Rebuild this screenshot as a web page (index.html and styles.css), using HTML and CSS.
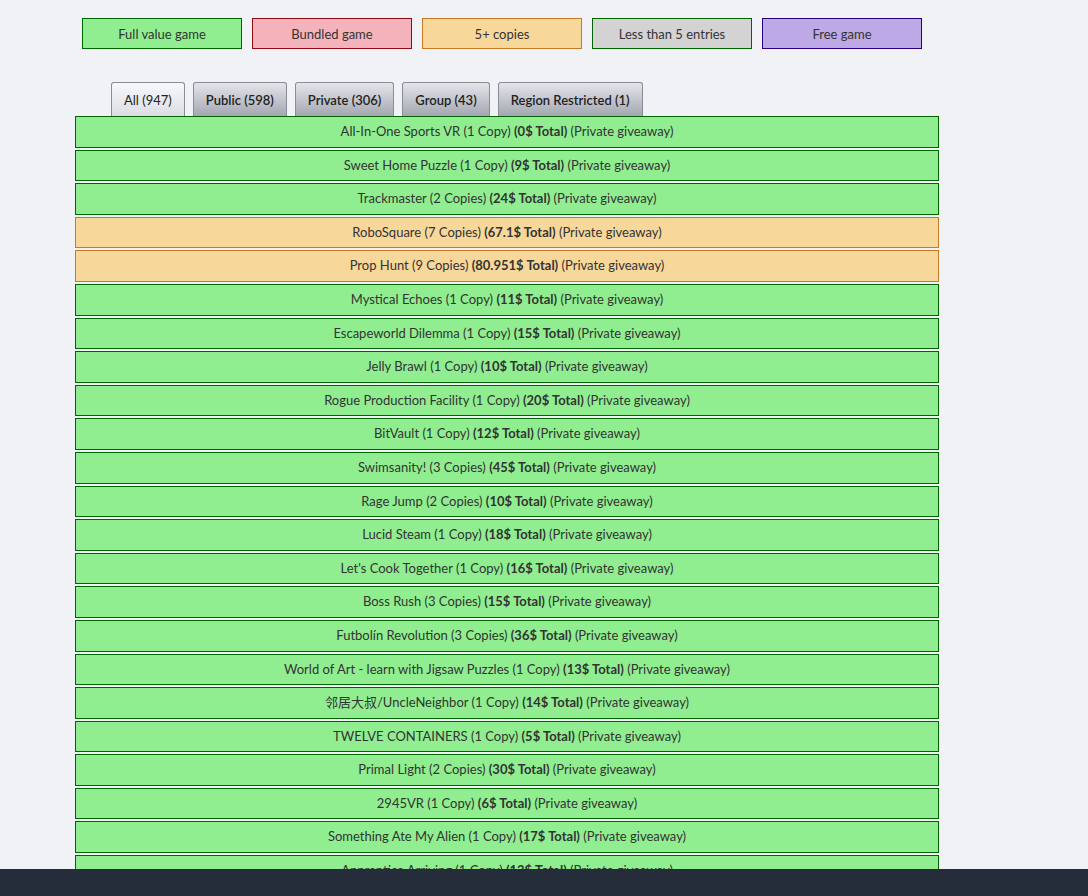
FILE: index.html
```html
<!DOCTYPE html>
<html lang="en">
<head>
  <meta charset="UTF-8" />
  <title>Giveaways</title>
  <link rel="stylesheet" href="styles.css">
</head>
<body>
  <div class="legend">
    <div class="legend-item full">Full value game</div>
    <div class="legend-item bundled">Bundled game</div>
    <div class="legend-item copies">5+ copies</div>
    <div class="legend-item few">Less than 5 entries</div>
    <div class="legend-item free">Free game</div>
  </div>

  <div class="giveaways">
    <div class="tabs">
      <div class="tab active">All (947)</div>
      <div class="tab">Public (598)</div>
      <div class="tab">Private (306)</div>
      <div class="tab">Group (43)</div>
      <div class="tab">Region Restricted (1)</div>
    </div>
    <div class="list">
      <div class="row full">All-In-One Sports VR (1 Copy) <b>(0$ Total)</b> (Private giveaway)</div>
      <div class="row full">Sweet Home Puzzle (1 Copy) <b>(9$ Total)</b> (Private giveaway)</div>
      <div class="row full">Trackmaster (2 Copies) <b>(24$ Total)</b> (Private giveaway)</div>
      <div class="row copies">RoboSquare (7 Copies) <b>(67.1$ Total)</b> (Private giveaway)</div>
      <div class="row copies">Prop Hunt (9 Copies) <b>(80.951$ Total)</b> (Private giveaway)</div>
      <div class="row full">Mystical Echoes (1 Copy) <b>(11$ Total)</b> (Private giveaway)</div>
      <div class="row full">Escapeworld Dilemma (1 Copy) <b>(15$ Total)</b> (Private giveaway)</div>
      <div class="row full">Jelly Brawl (1 Copy) <b>(10$ Total)</b> (Private giveaway)</div>
      <div class="row full">Rogue Production Facility (1 Copy) <b>(20$ Total)</b> (Private giveaway)</div>
      <div class="row full">BitVault (1 Copy) <b>(12$ Total)</b> (Private giveaway)</div>
      <div class="row full">Swimsanity! (3 Copies) <b>(45$ Total)</b> (Private giveaway)</div>
      <div class="row full">Rage Jump (2 Copies) <b>(10$ Total)</b> (Private giveaway)</div>
      <div class="row full">Lucid Steam (1 Copy) <b>(18$ Total)</b> (Private giveaway)</div>
      <div class="row full">Let's Cook Together (1 Copy) <b>(16$ Total)</b> (Private giveaway)</div>
      <div class="row full">Boss Rush (3 Copies) <b>(15$ Total)</b> (Private giveaway)</div>
      <div class="row full">Futbolín Revolution (3 Copies) <b>(36$ Total)</b> (Private giveaway)</div>
      <div class="row full">World of Art - learn with Jigsaw Puzzles (1 Copy) <b>(13$ Total)</b> (Private giveaway)</div>
      <div class="row full">邻居大叔/UncleNeighbor (1 Copy) <b>(14$ Total)</b> (Private giveaway)</div>
      <div class="row full">TWELVE CONTAINERS (1 Copy) <b>(5$ Total)</b> (Private giveaway)</div>
      <div class="row full">Primal Light (2 Copies) <b>(30$ Total)</b> (Private giveaway)</div>
      <div class="row full">2945VR (1 Copy) <b>(6$ Total)</b> (Private giveaway)</div>
      <div class="row full">Something Ate My Alien (1 Copy) <b>(17$ Total)</b> (Private giveaway)</div>
      <div class="row full">Apprentice Arriving (1 Copy) <b>(13$ Total)</b> (Private giveaway)</div>
      <div class="row full">Orbital Racer (1 Copy) <b>(10$ Total)</b> (Private giveaway)</div>
    </div>
  </div>

  <div class="footer-bar"></div>
</body>
</html>
```

FILE: styles.css
```css
body {
  font-family: Lato, "Noto Sans CJK SC", sans-serif;
  font-size: 13px;
  color: #333;
  background-color: #f0f2f5;
  margin: 0;
  padding: 18px 0 40px 75px;
}

.legend {
  display: flex;
  gap: 10px;
  margin-left: 7px;
}

.legend-item {
  width: 160px;
  height: 31px;
  box-sizing: border-box;
  display: flex;
  align-items: center;
  justify-content: center;
  border: 1px solid;
}

.legend-item.full, .row.full {
  background-color: #90ee90;
  border-color: #006400;
}

.legend-item.bundled {
  background-color: #f4b3ba;
  border-color: #8b0a14;
}

.legend-item.copies, .row.copies {
  background-color: #f8d79b;
  border-color: #c47a26;
}

.legend-item.few {
  background-color: #d3d3d3;
  border-color: #006400;
}

.legend-item.free {
  background-color: #bda9e5;
  border-color: #2a0080;
}

.giveaways {
  width: 864px;
  margin-top: 33px;
}

.tabs {
  display: flex;
  gap: 8px;
  padding-left: 36px;
}

.tab {
  height: 34px;
  box-sizing: border-box;
  padding: 0 12px;
  display: flex;
  align-items: center;
  border: 1px solid #8a8d94;
  border-bottom: none;
  border-radius: 3px 3px 0 0;
  background: linear-gradient(#e3e5ea, #a3a7b1);
  color: #222;
  font-weight: 600;
}

.tab.active {
  background: linear-gradient(#f7f8fa, #dcdee4);
  font-weight: normal;
}

.list {
  display: flex;
  flex-direction: column;
  gap: 2px;
}

.row {
  height: 31.6px;
  line-height: 29.6px;
  box-sizing: border-box;
  text-align: center;
  border: 1px solid;
  white-space: nowrap;
}

.row b {
  font-weight: bold;
}

.footer-bar {
  position: fixed;
  left: 0;
  right: 0;
  bottom: 0;
  height: 27px;
  background-color: #252d3a;
}
```
